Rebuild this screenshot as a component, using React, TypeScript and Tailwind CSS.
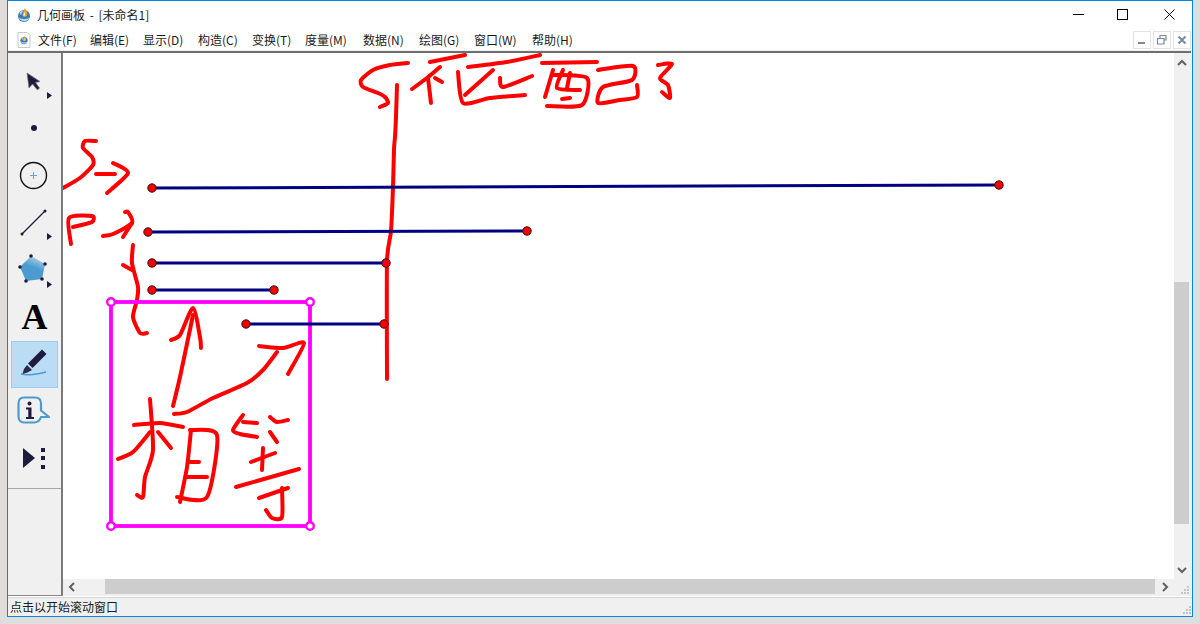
import React from "react";

const menus = [
  { label: "文件(F)", w: "w-[52px]" },
  { label: "编辑(E)", w: "w-[53px]" },
  { label: "显示(D)", w: "w-[55px]" },
  { label: "构造(C)", w: "w-[54px]" },
  { label: "变换(T)", w: "w-[53px]" },
  { label: "度量(M)", w: "w-[58px]" },
  { label: "数据(N)", w: "w-[56px]" },
  { label: "绘图(G)", w: "w-[55px]" },
  { label: "窗口(W)", w: "w-[58px]" },
  { label: "帮助(H)", w: "w-[50px]" },
];

// hand-drawn red strokes, in page coordinates
const ink = [
  "408,63 390,65 373,70 361,80 363,87 378,93 385,97 388,103 380,107",
  "397,85 396,117 395,137 394,149 393,187 391,231 387,262 387,379",
  "430,62 465,55",
  "412,89 427,78 440,67",
  "428,78 431,103",
  "435,78 442,82",
  "468,67 507,62 540,55",
  "458,72 463,103 490,98 525,95",
  "465,95 493,70",
  "500,78 503,87 532,76",
  "542,63 597,62",
  "553,70 545,97",
  "552,75 587,78 582,105 547,106",
  "563,70 557,88 580,90",
  "570,73 567,88",
  "562,99 570,98",
  "598,70 633,66 632,80 603,87 598,103 620,100 637,97 637,85",
  "658,65 672,64 660,78 668,85 670,98 662,92",
  "96,141 85,141 83,148 92,157 93,165 80,178 63,188",
  "96,174 115,174",
  "113,163 128,173 107,193",
  "71,244 69,218 92,216 92,222 73,227",
  "103,236 113,234 132,223 128,212 125,212",
  "132,223 123,237",
  "133,245 132,263 138,287 137,300 133,317 140,333 147,333",
  "123,265 132,270",
  "173,406 180,377 193,315",
  "171,340 180,335 193,308 200,337 201,348",
  "174,414 187,412 213,398 247,383 263,370 277,352",
  "259,346 283,348 304,343 288,374",
  "150,399 153,450 145,477 143,497 137,495",
  "134,425 160,423 183,427",
  "118,459 133,452 150,432",
  "158,432 171,448",
  "190,430 217,435 207,497 177,497",
  "191,430 187,467 180,502",
  "190,462 199,462",
  "186,477 207,477",
  "243,415 233,430 240,434 257,437",
  "243,422 257,423",
  "270,417 277,422 288,420",
  "270,432 277,442",
  "251,462 275,453",
  "263,448 262,470",
  "236,487 299,469",
  "259,498 288,488",
  "282,488 282,517 272,518 266,510",
];

// catmull-rom through the points so the strokes look hand drawn
const smooth = (pts: string) => {
  const p = pts.split(" ").map((s) => s.split(",").map(Number));
  let d = `M${p[0][0]} ${p[0][1]}`;
  for (let i = 0; i < p.length - 1; i++) {
    const a = p[i - 1] || p[i];
    const b = p[i];
    const c = p[i + 1];
    const e = p[i + 2] || c;
    const k = 0.12;
    d += `C${b[0] + (c[0] - a[0]) * k} ${b[1] + (c[1] - a[1]) * k} ${c[0] - (e[0] - b[0]) * k} ${c[1] - (e[1] - b[1]) * k} ${c[0]} ${c[1]}`;
  }
  return d;
};

const segments = [
  [152, 187, 999, 184],
  [148, 231, 527, 230],
  [152, 262, 386, 262],
  [152, 289, 274, 289],
  [246, 323, 384, 323],
];

const Sub = ({ y }: { y: number }) => <path d={`M36 ${y}l5 3.500-5 3.500z`} fill="#1f1b3d" />;

const tools = [
  <svg key="arrow" viewBox="0 0 47 47" className="h-full w-full">
    <path d="M16 14l2 15 3.500-4 5 6 2-2-4-5.500 4.500-1z" fill="#1f1b3d" stroke="#77758a" strokeWidth="0.800" />
    <Sub y={33} />
  </svg>,
  <svg key="point" viewBox="0 0 47 47" className="h-full w-full">
    <circle cx="23" cy="22" r="3" fill="#1f1b3d" />
  </svg>,
  <svg key="circle" viewBox="0 0 47 47" className="h-full w-full">
    <circle cx="22.500" cy="22.500" r="13" fill="none" stroke="#111" strokeWidth="1.400" />
    <path d="M22.500 19v7M19 22.500h7" stroke="#6aa5cf" strokeWidth="1" />
  </svg>,
  <svg key="line" viewBox="0 0 47 47" className="h-full w-full">
    <path d="M11 34L34 11" stroke="#1f1b3d" strokeWidth="1.300" />
    <circle cx="11" cy="34" r="1.500" fill="#1f1b3d" />
    <circle cx="34" cy="11" r="1.500" fill="#1f1b3d" />
    <Sub y={33} />
  </svg>,
  <svg key="polygon" viewBox="0 0 47 47" className="h-full w-full">
    <defs>
      <linearGradient id="poly" x1="0.700" y1="0" x2="0.300" y2="1">
        <stop offset="0" stopColor="#b5d6ec" />
        <stop offset="0.450" stopColor="#4c9bd0" />
        <stop offset="1" stopColor="#4a9ad0" />
      </linearGradient>
    </defs>
    <path d="M20 9l14 8-3 15-16 2-6-14z" fill="url(#poly)" />
    {[[20, 9], [34, 17], [31, 32], [15, 34], [9, 20]].map(([x, y]) => (
      <circle key={x} cx={x} cy={y} r="1.800" fill="#1f1b3d" />
    ))}
    <Sub y={34} />
  </svg>,
  <span key="text" className="flex h-full items-center justify-center pb-[2px] font-['Liberation_Serif',serif] text-[36px] font-bold leading-none text-black">
    A
  </span>,
  <svg key="pen" viewBox="0 0 47 47" className="h-full w-full">
    <path d="M10 33c6 1.500 17 .500 25-2" fill="none" stroke="#4b9bd2" strokeWidth="1.600" />
    <path d="M31 8.500l4.500 4.500-14 14-4.500-4.500z" fill="#1f1b3d" />
    <path d="M16 24l5 5-4.500 2.500-5 1.500 1.500-5z" fill="#2c2a4a" />
  </svg>,
  <svg key="info" viewBox="0 0 47 47" className="h-full w-full">
    <path d="M13 9.500h11c4 0 6 2.500 6 6v7l8 6.500h-8c-1 3-3 5.500-7 5.500H13c-3.500 0-5.500-2.500-5.500-6V15.500c0-3.500 2-6 5.500-6z" fill="none" stroke="#4b9bd2" strokeWidth="2.200" strokeLinejoin="round" />
    <circle cx="18.500" cy="15.500" r="2" fill="#1f1b3d" />
    <path d="M15 19.500h5.500V29H23v2h-8v-2h2.300v-7.500H15z" fill="#1f1b3d" />
  </svg>,
  <svg key="custom" viewBox="0 0 47 47" className="h-full w-full">
    <path d="M12 13l12 10-12 10z" fill="#1f1b3d" />
    <rect x="30" y="13" width="4" height="4" fill="#1f1b3d" />
    <rect x="30" y="21" width="4" height="4" fill="#1f1b3d" />
    <rect x="30" y="30" width="4" height="4" fill="#1f1b3d" />
  </svg>,
];

const Globe = () => (
  <>
    <circle cx="8" cy="9" r="6" fill="#2f7fc4" />
    <path d="M3 11c2 3.500 8 4.500 10.500 0-3 1.500-7 1.500-10.500 0z" fill="#d4dce2" />
    <path d="M3.500 6c1-1.500 2.500-2.500 3.500-2.500L5 8z" fill="#bcd8ec" />
    <path d="M8.500 1c2 2.500 3.500 5 2.500 7.500-.6 1.500-3 2-4 .8C6 7.500 7.800 4 8.500 1z" fill="#f0a020" />
    <path d="M8.500 5c.8 1 1 2.500.5 3.500-.5.600-1.500.600-1.800 0C7 7.500 8 6.500 8.500 5z" fill="#fbe9b0" />
  </>
);

const AppIcon = () => (
  <svg viewBox="0 0 16 16" className="h-4 w-4">
    <Globe />
  </svg>
);

const DocIcon = () => (
  <svg viewBox="0 0 16 16" className="h-4 w-4">
    <path d="M2 .500h9l3 3v12H2z" fill="#fdfdfd" stroke="#c8c8c8" />
    <g transform="translate(3.200 3.200) scale(0.600)">
      <Globe />
    </g>
  </svg>
);

const Grip = () => (
  <svg viewBox="0 0 8 8" className="h-2 w-2">
    {[[6, 0], [3, 3], [6, 3], [0, 6], [3, 6], [6, 6]].map(([x, y]) => (
      <rect key={`${x}-${y}`} x={x} y={y} width="2" height="2" fill="#c4c4c4" />
    ))}
  </svg>
);

const Chevron = ({ d }: { d: string }) => (
  <svg viewBox="0 0 10 10" className="h-[10px] w-[10px]">
    <path d={d} fill="none" stroke="#606060" strokeWidth="2" />
  </svg>
);

const MdiButton = ({ children }: { children: React.ReactNode }) => (
  <div className="flex h-[18px] w-[18px] items-center justify-center border border-[#e3e3e3] bg-white">
    <svg viewBox="0 0 12 12" className="h-3 w-3">
      {children}
    </svg>
  </div>
);

export default function App() {
  return (
    <div className="h-[624px] w-[1200px] overflow-hidden bg-[#dedede] pl-[7px] font-['Noto_Sans_CJK_SC','Noto_Sans',sans-serif] text-xs text-[#1a1a1a]">
      <div className="flex h-[617px] w-[1186px] flex-col border border-[#0a84e3] bg-white">
        {/* title bar */}
        <div className="flex h-[27px] shrink-0 items-center pl-[8px]">
          <AppIcon />
          <span className="ml-[5px] text-xs [word-spacing:2px]">几何画板 - [未命名1]</span>
          <div className="ml-auto flex h-full items-center">
            <div className="flex h-full w-[46px] items-center justify-center pl-[2px]">
              <svg viewBox="0 0 11 11" className="h-[11px] w-[11px]"><path d="M0 5.500h11" stroke="#000" /></svg>
            </div>
            <div className="flex h-full w-[46px] items-center justify-center pr-[1px]">
              <svg viewBox="0 0 11 11" className="h-[11px] w-[11px]"><rect x="0.500" y="0.500" width="10" height="10" fill="none" stroke="#000" /></svg>
            </div>
            <div className="flex h-full w-[46px] items-center justify-center">
              <svg viewBox="0 0 11 11" className="h-[11px] w-[11px]"><path d="M0.500 0.500l10 10M10.500 0.500l-10 10" stroke="#000" /></svg>
            </div>
          </div>
        </div>

        {/* menu bar */}
        <div className="flex h-[23px] shrink-0 items-center border-b border-[#f0f0f0] pl-[8px] pt-[1px]">
          <DocIcon />
          <div className="ml-[6px] flex">
            {menus.map((m) => (
              <span key={m.label} className={`${m.w} shrink-0 text-xs`}>{m.label}</span>
            ))}
          </div>
          <div className="ml-auto mr-[1px] flex gap-[2px]">
            <MdiButton><path d="M2 9h7" stroke="#7b8a9b" strokeWidth="2" /></MdiButton>
            <MdiButton>
              <path d="M4 4V1.500h6V6H8M1.500 4.500H8V10H1.500z" fill="none" stroke="#7b8a9b" strokeWidth="1.200" />
            </MdiButton>
            <MdiButton><path d="M2.500 2.500l7 7M9.500 2.500l-7 7" stroke="#7b8a9b" strokeWidth="2" /></MdiButton>
          </div>
        </div>
        <div className="mr-[1px] h-[2px] shrink-0 bg-[#6e6e6e]" />

        {/* work area */}
        <div className="flex h-[543px] shrink-0 bg-[#f0f0f0]">
          <div className="flex w-[55px] shrink-0 flex-col border-r-2 border-b border-r-[#7a7a7a] border-b-[#8a8a8a] pt-[6px]">
            {tools.map((tool, i) => (
              <div
                key={i}
                className={
                  i === 6
                    ? "ml-[3px] h-[47px] w-[47px] shrink-0 bg-[#bbdcf5] ring-1 ring-inset ring-[#9cccf2]"
                    : "ml-[3px] h-[47px] w-[47px] shrink-0"
                }
              >
                {tool}
              </div>
            ))}
            <div className="mt-[6px] h-px bg-[#a8a8a8]" />
          </div>

          <div className="flex min-w-0 flex-1 flex-col">
            <div className="flex min-h-0 flex-1">
              <div className="flex-1 bg-white">
                <svg viewBox="63 52 1111 526" className="block h-[526px] w-[1111px]">
                  <g transform="translate(0 -1)" fill="none" stroke="#ff0000" strokeWidth="4" strokeLinecap="round" strokeLinejoin="round">
                    {ink.map((pts) => (
                      <path key={pts} d={smooth(pts)} />
                    ))}
                  </g>
                  <rect x="111" y="301" width="199" height="224" fill="none" stroke="#ff00ff" strokeWidth="3.800" />
                  {[[111, 301], [310, 301], [111, 525], [310, 525]].map(([x, y]) => (
                    <circle key={`${x}-${y}`} cx={x} cy={y} r="3.800" fill="#fff" stroke="#ff00ff" strokeWidth="2.400" />
                  ))}
                  {segments.map(([x1, y1, x2, y2]) => (
                    <g key={y1}>
                      <line x1={x1} y1={y1} x2={x2} y2={y2} stroke="#000080" strokeWidth="3" />
                      <circle cx={x1} cy={y1} r="4.200" fill="#f80000" stroke="#301010" strokeWidth="1" />
                      <circle cx={x2} cy={y2} r="4.200" fill="#f80000" stroke="#301010" strokeWidth="1" />
                    </g>
                  ))}
                </svg>
              </div>
              {/* vertical scrollbar */}
              <div className="flex w-[18px] shrink-0 flex-col pr-[3px]">
                <div className="flex h-[18px] items-center justify-center pt-[2px]">
                  <Chevron d="M1 7l4-4 4 4" />
                </div>
                <div className="h-[211px]" />
                <div className="h-[242px] bg-[#cdcdcd]" />
                <div className="flex flex-1 items-end justify-center pb-[4px]">
                  <Chevron d="M1 3l4 4 4-4" />
                </div>
              </div>
            </div>
            {/* horizontal scrollbar */}
            <div className="flex h-[17px] shrink-0 pb-[2px]">
              <div className="flex w-[42px] items-center pl-[4px]">
                <Chevron d="M7 1L3 5l4 4" />
              </div>
              <div className="w-[1050px] bg-[#cdcdcd]" />
              <div className="flex w-[19px] items-center justify-center">
                <Chevron d="M3 1l4 4-4 4" />
              </div>
              <div className="flex flex-1 items-end justify-end pr-[3px]">
                <Grip />
              </div>
            </div>
          </div>
        </div>

        {/* status bar */}
        <div className="mt-px flex flex-1 items-center justify-between border-t border-[#d8d8d8] bg-[#f0f0f0] pl-[2px] pr-[1px]">
          <span className="text-xs">点击以开始滚动窗口</span>
          <div className="self-end pb-[2px]">
            <Grip />
          </div>
        </div>
      </div>
    </div>
  );
}
